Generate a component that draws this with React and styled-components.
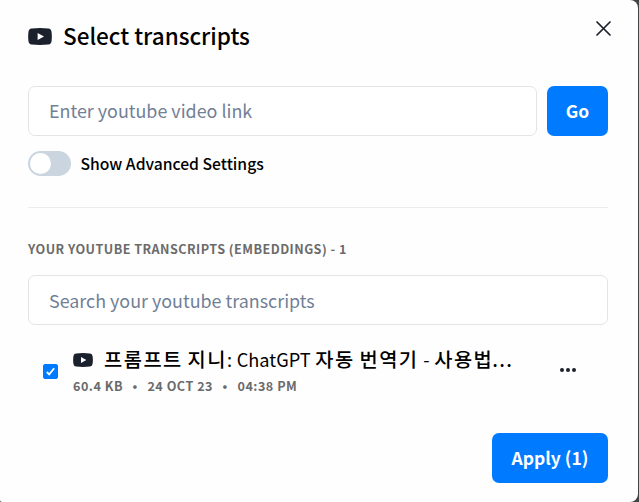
import { useState } from "react";
import styled, { createGlobalStyle } from "styled-components";

const GlobalStyle = createGlobalStyle`
  * {
    box-sizing: border-box;
  }

  body {
    margin: 0;
    background-color: #434343;
    font-family: "Noto Sans CJK KR", "Noto Sans", sans-serif;
    color: #000000;
    overflow: hidden;
  }

  button,
  input {
    font-family: inherit;
  }
`;

const Modal = styled.div`
  display: flex;
  flex-direction: column;
  width: 638px;
  height: 502px;
  padding: 18px 30px 19px 28px;
  background-color: #fefefe;
  border-radius: 0 8px 8px 2px;
`;

const ModalHeader = styled.header`
  display: flex;
  align-items: flex-start;
  justify-content: space-between;
  height: 68px;
`;

const Title = styled.h2`
  display: flex;
  align-items: center;
  gap: 11px;
  margin: 0;
  font-size: 22.5px;
  font-weight: 500;
  line-height: 36px;
  white-space: nowrap;
`;

const TitleText = styled.span`
  padding-bottom: 2px;
  line-height: 34px;
`;

const CloseButton = styled.button`
  display: flex;
  margin: 2px -5px 0 0;
  padding: 0;
  border: none;
  background: none;
  cursor: pointer;
`;

const LinkRow = styled.div`
  display: flex;
  gap: 10px;
`;

const TextInput = styled.input`
  flex: ${(props) => (props.$block ? "none" : "1")};
  min-width: 0;
  width: 100%;
  height: 50px;
  padding: ${(props) => (props.$block ? "0 20px" : "0 20px 2px")};
  border: 1px solid #e2e4e8;
  border-radius: 7px;
  background-color: #ffffff;
  font-size: 17.9px;
  line-height: 26px;
  outline: none;

  &::placeholder {
    color: #718096;
    opacity: 1;
  }
`;

const PrimaryButton = styled.button`
  width: ${(props) => props.$width};
  height: 50px;
  padding: 0 0 1px;
  border: none;
  border-radius: 7px;
  background-color: #007bff;
  color: #ffffff;
  font-size: 17.5px;
  font-weight: 700;
  line-height: 26px;
  cursor: pointer;
`;

const ToggleRow = styled.label`
  display: flex;
  align-items: center;
  gap: 9.5px;
  height: 25px;
  margin-top: 15px;
  font-size: 15.7px;
  font-weight: 500;
  line-height: 25px;
  cursor: pointer;
`;

const ToggleTrack = styled.button`
  display: flex;
  align-items: center;
  justify-content: ${(props) => (props.$on ? "flex-end" : "flex-start")};
  width: 43px;
  height: 25px;
  padding: 0 2px;
  border: none;
  border-radius: 13px;
  background-color: ${(props) => (props.$on ? "#007bff" : "#cbd5e0")};
  cursor: pointer;
`;

const ToggleThumb = styled.span`
  width: 21px;
  height: 21px;
  border-radius: 50%;
  background-color: #ffffff;
`;

const Divider = styled.hr`
  width: 100%;
  height: 1px;
  margin: 31px 0 0;
  border: none;
  background-color: #ececee;
`;

const SectionLabel = styled.h3`
  margin: 31px 0 16px;
  font-size: 12.6px;
  font-weight: 700;
  line-height: 20px;
  letter-spacing: 0.46px;
  color: #6b6b6b;
  text-transform: uppercase;
  white-space: nowrap;
`;

const TranscriptRow = styled.div`
  display: flex;
  align-items: center;
  height: 50px;
  margin-top: 21px;
  padding: 0 30px 0 15px;
`;

const CheckBox = styled.button`
  display: flex;
  align-items: center;
  justify-content: center;
  width: 15px;
  height: 15px;
  padding: 0;
  border: 1px solid #007bff;
  border-radius: 2px;
  background-color: ${(props) => (props.$checked ? "#007bff" : "#ffffff")};
  cursor: pointer;
`;

const TranscriptInfo = styled.div`
  flex: 1;
  margin-left: 15px;
`;

const TranscriptTitle = styled.div`
  display: flex;
  align-items: center;
  gap: 11px;
  height: 30px;
  padding-bottom: 2px;
  font-size: 18.2px;
  line-height: 26px;
  white-space: nowrap;
`;

const TranscriptName = styled.span`
  padding-bottom: 2px;
  word-spacing: 0.6px;
`;

const Hangul = styled.span`
  font-weight: 500;
  font-size: 19.8px;
  letter-spacing: 1.5px;
  word-spacing: -1.2px;
`;

const Ellipsis = styled.span`
  font-size: 19px;
  font-weight: 500;
  letter-spacing: 1.3px;
  margin-left: -1px;
`;

const TranscriptMeta = styled.div`
  display: flex;
  gap: 9.6px;
  font-size: 12.6px;
  font-weight: 700;
  line-height: 20px;
  letter-spacing: 0.5px;
  color: #6b6b6b;
  white-space: nowrap;
`;

const MenuButton = styled.button`
  display: flex;
  padding: 0 0 2px;
  border: none;
  background: none;
  cursor: pointer;
`;

const ModalFooter = styled.footer`
  display: flex;
  justify-content: flex-end;
  margin-top: auto;
`;

function VideoIcon({ width, height }) {
  return (
    <svg width={width} height={height} viewBox="0 0 24 17" preserveAspectRatio="none">
      <path
        d="M3.6.5Q12-.4 20.4.5Q23.2.8 23.5 3.8Q24.2 8.5 23.5 13.2Q23.2 16.2 20.4 16.5Q12 17.4 3.6 16.5Q.8 16.2.5 13.2Q-.2 8.5.5 3.8Q.8.8 3.6.5Z"
        fill="#1a202c"
      />
      <path d="M9.6 4.9L16 8.5L9.6 12.1Z" fill="#ffffff" />
    </svg>
  );
}

export default function App() {
  const [link, setLink] = useState("");
  const [search, setSearch] = useState("");
  const [advanced, setAdvanced] = useState(false);
  const [checked, setChecked] = useState(true);

  return (
    <>
      <GlobalStyle />
      <Modal>
        <ModalHeader>
          <Title>
            <VideoIcon width={24} height={17} />
            <TitleText>Select transcripts</TitleText>
          </Title>
          <CloseButton aria-label="Close">
            <svg width="18" height="18" viewBox="0 0 18 18">
              <path d="M2 2L15 15M15 2L2 15" stroke="#1a202c" strokeWidth="1.7" strokeLinecap="round" />
            </svg>
          </CloseButton>
        </ModalHeader>

        <LinkRow>
          <TextInput
            placeholder="Enter youtube video link"
            value={link}
            onChange={(e) => setLink(e.target.value)}
          />
          <PrimaryButton $width="61px">Go</PrimaryButton>
        </LinkRow>

        <ToggleRow>
          <ToggleTrack $on={advanced} onClick={() => setAdvanced(!advanced)}>
            <ToggleThumb />
          </ToggleTrack>
          Show Advanced Settings
        </ToggleRow>

        <Divider />

        <SectionLabel>Your youtube transcripts (embeddings) - 1</SectionLabel>
        <TextInput
          $block
          placeholder="Search your youtube transcripts"
          value={search}
          onChange={(e) => setSearch(e.target.value)}
        />

        <TranscriptRow>
          <CheckBox $checked={checked} onClick={() => setChecked(!checked)}>
            {checked && (
              <svg width="11" height="11" viewBox="0 0 11 11">
                <path d="M1.8 6L4.2 8.4L9.2 2.2" fill="none" stroke="#ffffff" strokeWidth="1.8" />
              </svg>
            )}
          </CheckBox>
          <TranscriptInfo>
            <TranscriptTitle>
              <VideoIcon width={20} height={14} />
              <TranscriptName>
                <Hangul>프롬프트 지니</Hangul>: ChatGPT <Hangul>자동 번역기</Hangul> - <Hangul>사용법</Hangul>
                <Ellipsis>...</Ellipsis>
              </TranscriptName>
            </TranscriptTitle>
            <TranscriptMeta>
              <span>60.4 KB</span>
              <span>•</span>
              <span>24 OCT 23</span>
              <span>•</span>
              <span>04:38 PM</span>
            </TranscriptMeta>
          </TranscriptInfo>
          <MenuButton aria-label="More">
            <svg width="20" height="6" viewBox="0 0 20 6">
              <circle cx="4" cy="3" r="2" fill="#1a202c" />
              <circle cx="10" cy="3" r="2" fill="#1a202c" />
              <circle cx="16" cy="3" r="2" fill="#1a202c" />
            </svg>
          </MenuButton>
        </TranscriptRow>

        <ModalFooter>
          <PrimaryButton $width="116px">Apply (1)</PrimaryButton>
        </ModalFooter>
      </Modal>
    </>
  );
}
